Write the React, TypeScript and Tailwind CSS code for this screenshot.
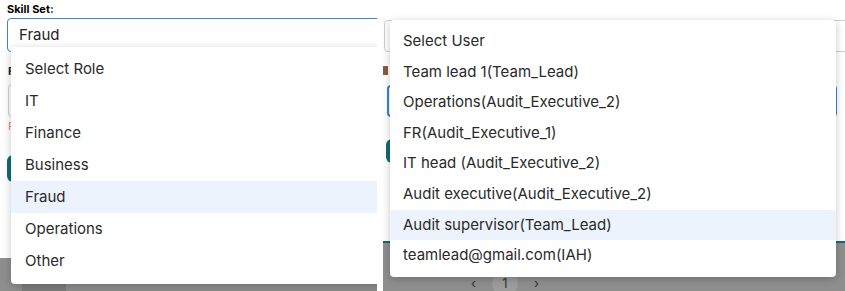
import React from "react";

const roles = ["Select Role", "IT", "Finance", "Business", "Fraud", "Operations", "Other"];
const users = [
  "Select User",
  "Team lead 1(Team_Lead)",
  "Operations(Audit_Executive_2)",
  "FR(Audit_Executive_1)",
  "IT head (Audit_Executive_2)",
  "Audit executive(Audit_Executive_2)",
  "Audit supervisor(Team_Lead)",
  "teamlead@gmail.com(IAH)",
];

const font = { fontFamily: "Inter, 'Noto Sans', sans-serif" };

// Left crop: skill set select with its open role menu
function RolePanel() {
  return (
    <div className="relative w-[377px] h-full overflow-hidden bg-white flex flex-col">
      <div className="pl-[7px] pt-[3px] text-[11px] font-bold text-black leading-[13px]">Skill Set:</div>
      <div className="ml-[7px] mt-[2px] h-[34px] w-[420px] shrink-0 rounded-[4px] border border-[#3b82d9] flex items-center pl-[11px] text-[15px] text-[#222]">
        Fraud
      </div>
      {/* form behind the menu */}
      <div className="pl-[8px] mt-[13px] text-[11px] font-bold text-[#222] leading-[13px]">R</div>
      <div className="ml-[8px] mt-[6px] h-[33px] w-[420px] shrink-0 rounded-[4px] border border-[#cfcfcf]" />
      <div className="pl-[8px] mt-[3px] text-[11px] text-[#e58a8a] leading-[13px]">F</div>
      <div className="ml-[7px] mt-[22px] h-[27px] w-[80px] shrink-0 rounded-[6px] bg-[#106c74]" />
      <div className="mt-auto h-[33px] bg-[#8e8e8e] flex">
        <div className="w-[22px]" />
        <div className="w-[44px] bg-[#7d7d7d]" />
      </div>

      <div className="absolute left-[11px] top-[47px] w-[400px] rounded-[4px] bg-white pt-[6px] pb-[7px] shadow-[0_2px_8px_rgba(0,0,0,0.22)]">
        {roles.map((r) => (
          <div
            key={r}
            className={`h-[32px] flex items-center pl-[14px] text-[15px] text-[#2a2a2a] ${r === "Fraud" ? "bg-[#edf3fc]" : ""}`}
          >
            {r}
          </div>
        ))}
      </div>
    </div>
  );
}

// Right crop: user select menu
function UserPanel() {
  return (
    <div className="relative flex-1 h-full overflow-hidden bg-white flex flex-col pl-[1px]">
      <div className="mt-[20px] ml-[1px] h-[32px] w-[470px] shrink-0 rounded-[4px] border border-[#cfcfcf]" />
      <div className="pl-[3px] mt-[14px] h-[9px] w-[5px] bg-[#8a5a3c]" />
      <div className="ml-[4px] mt-[10px] h-[32px] w-[450px] shrink-0 rounded-[4px] border-2 border-[#3b82d9]" />
      <div className="ml-[3px] mt-[22px] h-[24px] w-[60px] shrink-0 rounded-[6px] bg-[#106c74]" />
      <div className="mt-auto h-[50px] border-t-2 border-[#106c74] bg-[#8e8e8e] flex items-end">
        <div className="ml-[88px] mb-[-4px] flex items-center gap-[16px] text-[13px] text-[#333]">
          <span>‹</span>
          <span className="h-[22px] w-[26px] rounded-full bg-[#9c9c9c] flex items-center justify-center">1</span>
          <span>›</span>
        </div>
      </div>

      <div className="absolute left-[8px] top-[20px] w-[446px] rounded-[4px] bg-white pt-[6px] pb-[6px] shadow-[0_2px_8px_rgba(0,0,0,0.22)]">
        {users.map((u) => (
          <div
            key={u}
            className={`h-[30.6px] flex items-center pl-[13px] text-[15px] text-[#2a2a2a] ${u.startsWith("Audit supervisor") ? "bg-[#edf3fc]" : ""}`}
          >
            {u}
          </div>
        ))}
      </div>
    </div>
  );
}

export default function App() {
  return (
    <div className="w-[845px] h-[291px] bg-white flex gap-[5px] overflow-hidden" style={font}>
      <RolePanel />
      <UserPanel />
    </div>
  );
}
